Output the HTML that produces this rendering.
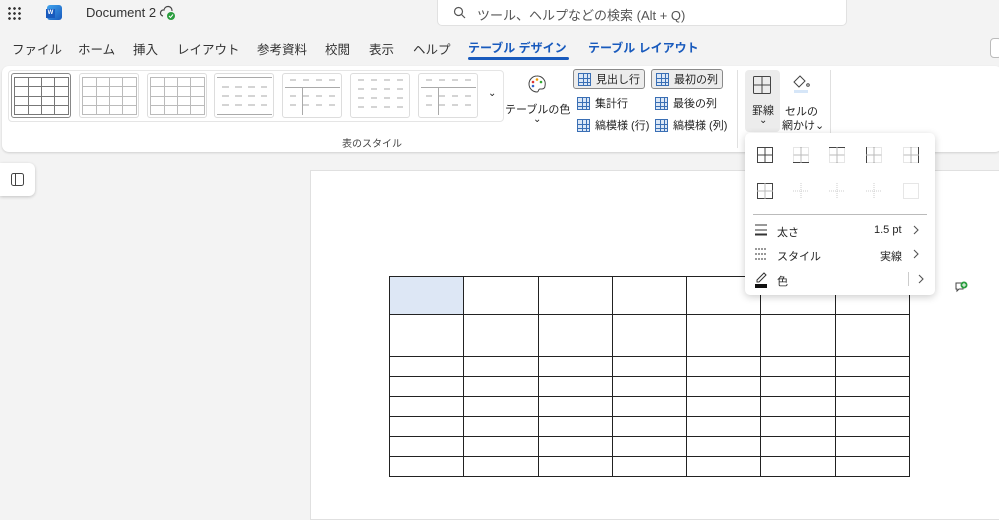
<!DOCTYPE html>
<html><head><meta charset="utf-8"><style>
*{box-sizing:border-box;margin:0;padding:0}
body{width:999px;height:515px;overflow:hidden;background:#f3f3f3;font-family:"Liberation Sans","Noto Sans CJK JP",sans-serif;position:relative;color:#242424}
.a{position:absolute}
.tab{position:absolute;top:39px;font-size:12.5px;color:#333}
.sty{position:absolute;top:73px;width:60px;height:45px;border:1px solid #ddd;border-radius:3px;background:#fff}
.chk{position:absolute;font-size:11px;display:flex;align-items:center;gap:5px;height:20px;padding:0 4px}
.chk.on{border:1px solid #8a8a8a;border-radius:3px;background:#ececec}
.gi{width:13px;height:13px;border:1px solid #3a6fb5;background:linear-gradient(#3a6fb5,#3a6fb5) 4px 0/1px 100% no-repeat,linear-gradient(#3a6fb5,#3a6fb5) 8px 0/1px 100% no-repeat,linear-gradient(#3a6fb5,#3a6fb5) 0 4px/100% 1px no-repeat,linear-gradient(#3a6fb5,#3a6fb5) 0 8px/100% 1px no-repeat,#dbe7f6}
table{position:absolute;left:389px;top:276px;border-collapse:collapse}
td{border:1px solid #222;padding:0}
.mi{position:absolute;font-size:11px;left:777px}
</style></head><body>
<div class="a" style="left:7px;top:6px;width:14px;height:14px;background:radial-gradient(circle,#333 1.2px,transparent 1.5px) 0 0/5px 5px"></div>
<div class="a" style="left:47px;top:5px;width:15px;height:15px;border-radius:3px;background:linear-gradient(135deg,#41a5ee,#185abd)"></div>
<div class="a" style="left:46px;top:9px;width:9px;height:9px;background:#185abd;color:#fff;font-size:6px;text-align:center;line-height:9px;font-weight:bold">W</div>
<div class="a" style="left:86px;top:5px;font-size:13px;color:#333">Document 2</div>
<svg class="a" style="left:159px;top:5px" width="18" height="16"><path d="M4 11a3 3 0 0 1 1-6 4 4 0 0 1 8 1" fill="none" stroke="#444" stroke-width="1.2"/><circle cx="12" cy="11" r="4" fill="#2a9d3e"/><path d="M10 11l1.5 1.5 2.5-3" stroke="#fff" fill="none"/></svg>
<div class="a" style="left:437px;top:0;width:410px;height:26px;background:#fff;border:1px solid #e1e1e1;border-top:none;border-radius:0 0 5px 5px"></div>
<svg class="a" style="left:453px;top:6px" width="13" height="13"><circle cx="5.5" cy="5.5" r="4" fill="none" stroke="#555" stroke-width="1.2"/><path d="M8.5 8.5l3.5 3.5" stroke="#555" stroke-width="1.2"/></svg>
<div class="a" style="left:477px;top:5px;font-size:13px;color:#555">ツール、ヘルプなどの検索 (Alt + Q)</div>
<div class="a" style="left:990px;top:38px;width:12px;height:20px;border:1px solid #bbb;border-radius:4px;background:#fff"></div>
<div class="tab" style="left:12px">ファイル</div>
<div class="tab" style="left:78px">ホーム</div>
<div class="tab" style="left:133px">挿入</div>
<div class="tab" style="left:177px">レイアウト</div>
<div class="tab" style="left:257px">参考資料</div>
<div class="tab" style="left:325px">校閲</div>
<div class="tab" style="left:369px">表示</div>
<div class="tab" style="left:413px">ヘルプ</div>
<div class="tab" style="left:468px;color:#185abd;font-weight:bold;font-size:12px">テーブル デザイン</div>
<div class="a" style="left:468px;top:57px;width:101px;height:3px;background:#185abd;border-radius:2px"></div>
<div class="tab" style="left:588px;color:#185abd;font-weight:bold;font-size:12px">テーブル レイアウト</div>
<div class="a" style="left:2px;top:66px;width:1000px;height:86px;background:#fff;border-radius:7px;box-shadow:0 1px 2px rgba(0,0,0,.15)"></div>
<div class="a" style="left:8px;top:70px;width:496px;height:52px;border:1px solid #e5e5e5;border-radius:4px"></div>
<div class="sty" style="left:11px;border-color:#888"></div>
<div class="sty" style="left:79px"></div>
<div class="sty" style="left:147px"></div>
<div class="sty" style="left:214px"></div>
<div class="sty" style="left:282px"></div>
<div class="sty" style="left:350px"></div>
<div class="sty" style="left:418px"></div>
<svg class="a" style="left:14px;top:77px" width="55" height="38"><g stroke="#777" fill="none"><rect x=".5" y=".5" width="54" height="37"/><path d="M0 9.5h55M0 19.5h55M0 28.5h55M14.5 0v38M27.5 0v38M40.5 0v38"/></g></svg>
<svg class="a" style="left:82px;top:77px" width="55" height="38"><g stroke="#bbb" fill="none"><rect x=".5" y=".5" width="54" height="37"/><path d="M0 9.5h55M0 19.5h55M0 28.5h55M14.5 0v38M27.5 0v38M40.5 0v38"/></g></svg>
<svg class="a" style="left:150px;top:77px" width="55" height="38"><g stroke="#bbb" fill="none"><rect x=".5" y=".5" width="54" height="37"/><path d="M0 9.5h55M0 19.5h55M0 28.5h55M14.5 0v38M27.5 0v38M40.5 0v38"/></g></svg>
<svg class="a" style="left:217px;top:77px" width="55" height="38"><g stroke="#aaa"><path d="M0 .5h55M0 37.5h55"/><path d="M5 10h45M5 19h45M5 28h45" stroke-dasharray="7 6"/></g></svg>
<svg class="a" style="left:285px;top:77px" width="55" height="38"><g stroke="#aaa"><path d="M0 10.5h55M17.5 10v28"/><path d="M5 3h45M5 19h45M5 28h45" stroke-dasharray="6 7"/></g></svg>
<svg class="a" style="left:353px;top:77px" width="55" height="38"><g stroke="#aaa"><path d="M5 3h45M5 12h45M5 21h45M5 30h45" stroke-dasharray="6 7"/></g></svg>
<svg class="a" style="left:421px;top:77px" width="55" height="38"><g stroke="#aaa"><path d="M0 10.5h55M17.5 10v28"/><path d="M5 3h45M5 19h45M5 28h45" stroke-dasharray="6 7"/></g></svg>
<div class="a" style="left:488px;top:88px;font-size:10px">⌄</div>
<div class="a" style="left:342px;top:135px;font-size:10px;color:#444">表のスタイル</div>
<svg class="a" style="left:527px;top:74px" width="20" height="20"><path d="M10 2a8 8 0 1 0 0 16c2 0 1-3 3-3h2a3 3 0 0 0 3-3A8 8 0 0 0 10 2z" fill="none" stroke="#444"/><circle cx="6" cy="8" r="1.3" fill="#d33"/><circle cx="10" cy="5.5" r="1.3" fill="#e90"/><circle cx="14" cy="8" r="1.3" fill="#3a3"/><circle cx="6" cy="12" r="1.3" fill="#36c"/></svg>
<div class="a" style="left:505px;top:101px;font-size:11px">テーブルの色</div>
<div class="a" style="left:533px;top:114px;font-size:10px">⌄</div>
<div class="chk on" style="left:573px;top:69px"><span class="gi"></span>見出し行</div>
<div class="chk" style="left:573px;top:93px"><span class="gi"></span>集計行</div>
<div class="chk" style="left:573px;top:115px"><span class="gi"></span>縞模様 (行)</div>
<div class="chk on" style="left:651px;top:69px"><span class="gi"></span>最初の列</div>
<div class="chk" style="left:651px;top:93px"><span class="gi"></span>最後の列</div>
<div class="chk" style="left:651px;top:115px"><span class="gi"></span>縞模様 (列)</div>
<div class="a" style="left:737px;top:70px;width:1px;height:78px;background:#e0e0e0"></div>
<div class="a" style="left:745px;top:70px;width:35px;height:62px;background:#ececec;border-radius:4px"></div>
<svg class="a" style="left:753px;top:76px" width="18" height="18"><g fill="none" stroke="#444"><rect x=".5" y=".5" width="17" height="17" rx="1"/><path d="M9 0v18M0 9h18"/></g></svg>
<div class="a" style="left:752px;top:102px;font-size:11px">罫線</div>
<div class="a" style="left:759px;top:115px;font-size:10px">⌄</div>
<svg class="a" style="left:791px;top:74px" width="20" height="20"><path d="M9 2l-6 6 5 5 6-6z" fill="none" stroke="#444"/><circle cx="17" cy="11" r="1.3" fill="none" stroke="#444"/><rect x="3" y="16" width="14" height="3" fill="#d6e6f8"/></svg>
<div class="a" style="left:785px;top:103px;font-size:11px">セルの</div>
<div class="a" style="left:782px;top:117px;font-size:11px">網かけ⌄</div>
<div class="a" style="left:830px;top:70px;width:1px;height:78px;background:#e0e0e0"></div>
<div class="a" style="left:0;top:163px;width:35px;height:33px;background:#fff;border-radius:0 6px 6px 0;box-shadow:0 1px 3px rgba(0,0,0,.2)"></div>
<svg class="a" style="left:11px;top:173px" width="13" height="13"><rect x=".5" y=".5" width="12" height="12" rx="2" fill="none" stroke="#444"/><path d="M4.5 0v13" stroke="#444"/></svg>
<div class="a" style="left:310px;top:170px;width:700px;height:350px;background:#fff;border:1px solid #e0e0e0"></div>
<table>
<tr style="height:38px"><td style="width:74px;background:#dde7f5"></td><td style="width:75px"></td><td style="width:74px"></td><td style="width:74px"></td><td style="width:74px"></td><td style="width:75px"></td><td style="width:74px"></td></tr>
<tr style="height:42px"><td></td><td></td><td></td><td></td><td></td><td></td><td></td></tr>
<tr style="height:20px"><td></td><td></td><td></td><td></td><td></td><td></td><td></td></tr>
<tr style="height:20px"><td></td><td></td><td></td><td></td><td></td><td></td><td></td></tr>
<tr style="height:20px"><td></td><td></td><td></td><td></td><td></td><td></td><td></td></tr>
<tr style="height:20px"><td></td><td></td><td></td><td></td><td></td><td></td><td></td></tr>
<tr style="height:20px"><td></td><td></td><td></td><td></td><td></td><td></td><td></td></tr>
<tr style="height:20px"><td></td><td></td><td></td><td></td><td></td><td></td><td></td></tr>
</table>
<svg class="a" style="left:954px;top:280px" width="14" height="14"><path d="M2 3h7v6H5l-2 2V9H2z" fill="none" stroke="#444"/><circle cx="10" cy="5" r="3.5" fill="#2a9d3e"/><path d="M10 3v4M8 5h4" stroke="#fff"/></svg>
<div class="a" style="left:745px;top:133px;width:190px;height:162px;background:#fff;border-radius:5px;box-shadow:0 2px 8px rgba(0,0,0,.2)"></div>
<svg class="a" style="left:756px;top:146px" width="170" height="54">
<g fill="none" stroke="#444"><rect x="1.5" y="1.5" width="15" height="15"/><path d="M9 1v16M1 9h16"/><rect x="1.5" y="37.5" width="15" height="15"/><path d="M9 37v16M1 45h16" stroke="#bbb"/></g>
<g fill="none" stroke="#ccc" stroke-dasharray="1 1"><rect x="37.5" y="1.5" width="15" height="15"/><rect x="73.5" y="1.5" width="15" height="15"/><rect x="110.5" y="1.5" width="15" height="15"/><rect x="147.5" y="1.5" width="15" height="15"/><rect x="147.5" y="37.5" width="15" height="15"/><path d="M45 37v16M37 45h16M81 37v16M73 45h16M118 37v16M110 45h16"/></g>
<g stroke="#444"><path d="M37 16.5h16M73 1.5h16M110.5 1v16M162.5 1v16"/></g>
<g stroke="#bbb"><path d="M45 1v16M37 9h16M81 1v16M73 9h16M118 1v16M110 9h16M155 1v16M147 9h16"/></g>
</svg>
<div class="a" style="left:753px;top:214px;width:174px;height:1px;background:#bbb"></div>
<svg class="a" style="left:755px;top:224px" width="12" height="66"><g stroke="#333"><path d="M0 1h12M0 6h12"/><path d="M0 10.5h12" stroke-width="2"/><path d="M0 25h12M0 30h12M0 35h12" stroke-dasharray="2 1"/></g><path d="M2 56l7-7 2 2-7 7H2z" fill="none" stroke="#333"/><rect x="0" y="60" width="12" height="4" fill="#111"/></svg>
<div class="mi" style="top:224px">太さ</div>
<div class="mi" style="top:248px">スタイル</div>
<div class="mi" style="top:273px">色</div>
<div class="a" style="left:874px;top:224px;font-size:11px">1.5 pt</div>
<div class="a" style="left:880px;top:248px;font-size:11px">実線</div>
<svg class="a" style="left:912px;top:225px" width="8" height="40"><g fill="none" stroke="#555" stroke-width="1.1"><path d="M2 1l4 4-4 4M2 25l4 4-4 4"/></g></svg>
<svg class="a" style="left:917px;top:274px" width="8" height="10"><path d="M2 1l4 4-4 4" fill="none" stroke="#555" stroke-width="1.1"/></svg>
<div class="a" style="left:908px;top:272px;width:1px;height:14px;background:#ccc"></div>
</body></html>
